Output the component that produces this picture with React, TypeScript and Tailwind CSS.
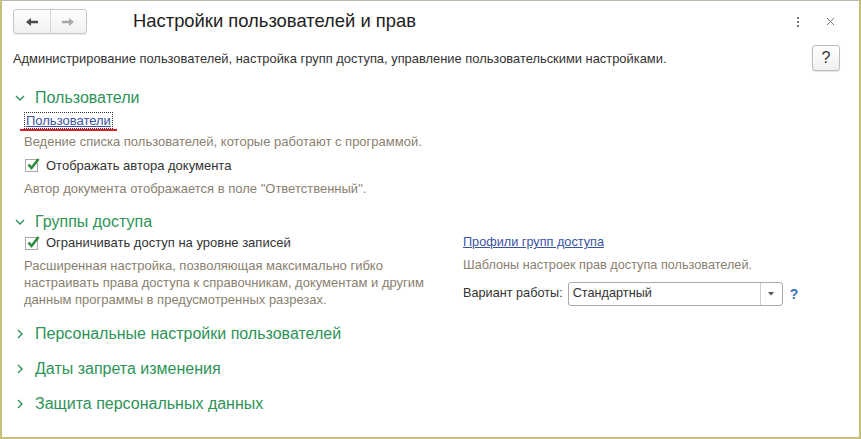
import React from "react";

const Chevron = ({ open }: { open: boolean }) => (
  <svg width="10" height="10" viewBox="0 0 10 10" className="shrink-0">
    {open ? (
      <path d="M1 3 L5 7 L9 3" fill="none" stroke="#2d9358" strokeWidth="1.4" />
    ) : (
      <path d="M3 1 L7 5 L3 9" fill="none" stroke="#2d9358" strokeWidth="1.4" />
    )}
  </svg>
);

const Check = () => (
  <span className="w-[13px] h-[13px] border border-[#a8a8a8] bg-white flex items-center justify-center shrink-0 relative">
    <svg width="15" height="14" viewBox="0 0 15 14" className="absolute -top-[3px] left-0">
      <path d="M2.5 7.5 L5.5 11 L12.5 2" fill="none" stroke="#2a8c3e" strokeWidth="2.6" />
    </svg>
  </span>
);

export default function App() {
  return (
    <div
      className="w-[861px] h-[439px] bg-white border-l-2 border-r-2 border-b-2 border-t border-l-[#c7c07a] border-r-[#c7c07a] border-b-[#c7c07a] border-t-[#b8b8a8] text-[13px] text-[#333] overflow-hidden"
      style={{ fontFamily: '"Liberation Sans", Arial, sans-serif' }}
    >
      {/* Header */}
      <div className="flex items-center h-[40px] pl-[11px] pr-[20px] pt-[1px]">
        <div className="flex h-[25px] w-[74px] border border-[#c8c8c8] rounded-[3px] bg-gradient-to-b from-white to-[#f0f0f0] shadow-[0_1px_1px_rgba(0,0,0,0.08)]">
          <div className="flex-1 flex items-center justify-center border-r border-[#d6d6d6]">
            <svg width="14" height="10" viewBox="0 0 14 10">
              <path d="M1 5 L6 1 L6 3.7 L13 3.7 L13 6.3 L6 6.3 L6 9 Z" fill="#4a4a4a" />
            </svg>
          </div>
          <div className="flex-1 flex items-center justify-center">
            <svg width="14" height="10" viewBox="0 0 14 10">
              <path d="M13 5 L8 1 L8 3.7 L1 3.7 L1 6.3 L8 6.3 L8 9 Z" fill="#a8a8a8" />
            </svg>
          </div>
        </div>
        <div className="ml-[46px] text-[18.4px] text-[#222] leading-none">Настройки пользователей и прав</div>
        <div className="flex-1" />
        <div className="flex flex-col gap-[2px] mr-[27px]">
          <span className="w-[2px] h-[2px] bg-[#777]" />
          <span className="w-[2px] h-[2px] bg-[#777]" />
          <span className="w-[2px] h-[2px] bg-[#777]" />
        </div>
        <svg width="9" height="9" viewBox="0 0 9 9" className="mr-[4px]">
          <path d="M1 1 L8 8 M8 1 L1 8" stroke="#777" strokeWidth="1" />
        </svg>
      </div>

      {/* Description row */}
      <div className="flex items-center pl-[11px] pr-[19px] h-[32px] mt-[2px]">
        <div className="flex-1 text-[#333] text-[12.9px]">
          Администрирование пользователей, настройка групп доступа, управление пользовательскими настройками.
        </div>
        <div className="w-[28px] h-[26px] border border-[#bcbcbc] rounded-[3px] bg-gradient-to-b from-white to-[#f0f0f0] flex items-center justify-center text-[16px] text-[#333] shadow-[0_1px_1px_rgba(0,0,0,0.1)] -mt-[2px]">
          ?
        </div>
      </div>

      {/* Section: Пользователи */}
      <div className="pl-[13px] mt-[12px]">
        <div className="flex items-center gap-[10px] h-[22px]">
          <Chevron open />
          <span className="text-[16px] text-[#2d9358]">Пользователи</span>
        </div>
        <div className="pl-[9px] mt-[1px] flex flex-col">
          <div className="h-[21px] flex items-center">
            <span className="relative">
              <span className="px-[1px] border border-dotted border-[#333] text-[#3a54a4] underline leading-[15px] inline-block">
                Пользователи
              </span>
              <span className="absolute left-[-4px] right-[-4px] top-[18px] h-[2px] bg-[#d41f28]" />
            </span>
          </div>
          <div className="h-[22px] flex items-center text-[#8a7f70]">
            Ведение списка пользователей, которые работают с программой.
          </div>
          <div className="h-[25px] flex items-center gap-[8px] pl-[1px]">
            <Check />
            <span>Отображать автора документа</span>
          </div>
          <div className="h-[22px] flex items-center text-[#8a7f70]">
            Автор документа отображается в поле "Ответственный".
          </div>
        </div>
      </div>

      {/* Section: Группы доступа */}
      <div className="pl-[13px] mt-[11px]">
        <div className="flex items-center gap-[10px] h-[22px]">
          <Chevron open />
          <span className="text-[16px] text-[#2d9358]">Группы доступа</span>
        </div>
        <div className="flex">
          <div className="w-[450px] pl-[9px]">
            <div className="h-[20px] flex items-center gap-[8px] pl-[1px]">
              <Check />
              <span>Ограничивать доступ на уровне записей</span>
            </div>
            <div className="text-[#8a7f70] leading-[17px] mt-[4px] w-[412px]">
              Расширенная настройка, позволяющая максимально гибко настраивать права доступа к справочникам, документам и другим данным программы в предусмотренных разрезах.
            </div>
          </div>
          <div className="flex flex-col -ml-[2px] text-[12.7px]">
            <div className="h-[20px] flex items-center">
              <span className="text-[#3a54a4] underline">Профили групп доступа</span>
            </div>
            <div className="h-[24px] flex items-center text-[#8a7f70] mt-[1px]">
              Шаблоны настроек прав доступа пользователей.
            </div>
            <div className="flex items-center mt-[4px]">
              <span className="mr-[5px]">Вариант работы:</span>
              <div className="w-[215px] h-[24px] border border-[#aaaaaa] rounded-[3px] flex bg-white">
                <div className="flex-1 pl-[4px] flex items-center">Стандартный</div>
                <div className="w-[22px] border-l border-[#cfcfcf] flex items-center justify-center">
                  <svg width="6" height="4" viewBox="0 0 6 4">
                    <path d="M0 0 L6 0 L3 3.5 Z" fill="#555" />
                  </svg>
                </div>
              </div>
              <span className="ml-[7px] text-[#3a6fb8] text-[14px] font-bold">?</span>
            </div>
          </div>
        </div>
      </div>

      {/* Collapsed sections */}
      <div className="pl-[13px] mt-[15px] flex flex-col gap-[13px]">
        {["Персональные настройки пользователей", "Даты запрета изменения", "Защита персональных данных"].map((t) => (
          <div key={t} className="flex items-center gap-[10px] h-[22px]">
            <Chevron open={false} />
            <span className="text-[16px] text-[#2d9358]">{t}</span>
          </div>
        ))}
      </div>
    </div>
  );
}
